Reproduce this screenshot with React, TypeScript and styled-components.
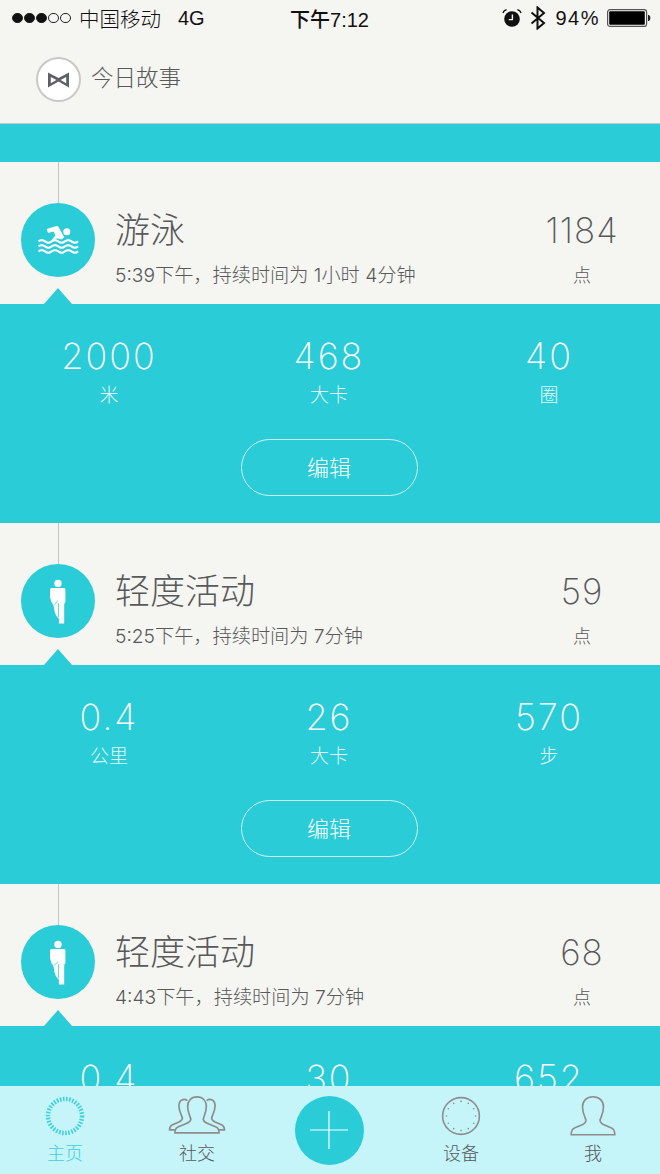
import React from "react";
import styled, { createGlobalStyle } from "styled-components";

const TEAL = "#29ccd7";
const PAPER = "#f5f5f1";
const INK = "#58595b";
const CJK = `"Noto Sans CJK SC", sans-serif`;

const GlobalStyle = createGlobalStyle`
  html, body {
    margin: 0;
    padding: 0;
    background: ${PAPER};
  }
  * {
    box-sizing: border-box;
  }
`;

const Page = styled.div`
  width: 660px;
  height: 1174px;
  display: flex;
  flex-direction: column;
  overflow: hidden;
  background: ${PAPER};
  font-family: "Inter", ${CJK};
`;

const StatusBar = styled.div`
  height: 36px;
  flex: none;
  padding: 0 9px 0 12px;
  display: grid;
  grid-template-columns: 1fr auto 1fr;
  align-items: center;
  color: #111;
  font-family: "Liberation Sans", ${CJK};
  font-size: 20px;
`;

const StatusLeft = styled.div`
  display: flex;
  align-items: center;
`;

const StatusRight = styled.div`
  display: flex;
  align-items: center;
  justify-content: flex-end;
`;

const Dot = styled.span<{ $on: boolean }>`
  width: 10.5px;
  height: 10.5px;
  border-radius: 50%;
  margin-right: 1.5px;
  border: 1px solid #222;
  background: ${(p) => (p.$on ? "#111" : "transparent")};
`;

const Carrier = styled.span`
  margin-left: 7px;
  font-size: 20.5px;
  font-weight: 300;
`;

const Network = styled.span`
  margin-left: 17px;
`;

const Clock = styled.span`
  margin-right: 4px;
  font-weight: 500;
  font-size: 20px;
`;

const AlarmSlot = styled.span`
  display: flex;
  margin-right: 8px;
`;

const Percent = styled.span`
  margin: 0 7px 0 9px;
  letter-spacing: 1.5px;
`;

const StoryBar = styled.div`
  height: 88px;
  flex: none;
  padding-left: 36px;
  display: flex;
  align-items: center;
  gap: 10px;
  border-bottom: 1px solid #c4c6c6;
`;

const StoryBadge = styled.div`
  width: 45px;
  height: 45px;
  border-radius: 50%;
  border: 2px solid #c9c9c9;
  background: #fff;
  display: flex;
  align-items: center;
  justify-content: center;
`;

const StoryTitle = styled.span`
  padding-bottom: 8px;
  font-family: ${CJK};
  font-weight: 300;
  font-size: 22.5px;
  color: ${INK};
`;

const Feed = styled.div`
  flex: 1;
  min-height: 0;
  overflow: hidden;
`;

const TopBand = styled.div`
  height: 38px;
  background: ${TEAL};
`;

const EntryHead = styled.div`
  height: 142px;
  padding-left: 21px;
  display: flex;
  color: ${INK};
`;

const Rail = styled.div`
  width: 74px;
  flex: none;
  display: flex;
  flex-direction: column;
  align-items: center;
`;

const RailLine = styled.div`
  width: 1px;
  height: 41px;
  background: #c4c6c6;
`;

const IconDisc = styled.div`
  width: 74px;
  height: 74px;
  border-radius: 50%;
  background: ${TEAL};
`;

const EntryText = styled.div`
  width: 417px;
  margin-left: 20px;
  padding-top: 40px;
`;

const EntryTitle = styled.div`
  font-family: ${CJK};
  font-weight: 300;
  font-size: 35px;
  line-height: 52px;
`;

const EntryMeta = styled.div`
  margin-top: 8px;
  font-size: 19.2px;
  line-height: 26px;
  font-weight: 300;
  white-space: nowrap;
`;

const Score = styled.div`
  width: 100px;
  padding-top: 42px;
  text-align: center;
`;

const ScoreValue = styled.div`
  font-size: 35px;
  font-weight: 250;
  line-height: 52px;
  letter-spacing: 1px;
`;

const ScoreUnit = styled.div`
  margin-top: 5px;
  font-family: ${CJK};
  font-weight: 300;
  font-size: 18px;
  line-height: 26px;
`;

const Panel = styled.div`
  position: relative;
  height: 219px;
  padding-top: 30px;
  background: ${TEAL};
  color: #fff;
  display: flex;
  flex-direction: column;
  align-items: center;

  &::before {
    content: "";
    position: absolute;
    left: 44px;
    top: -16px;
    border-left: 14px solid transparent;
    border-right: 14px solid transparent;
    border-bottom: 16px solid ${TEAL};
  }
`;

const StatGrid = styled.div`
  width: 660px;
  margin-left: -2px;
  display: grid;
  grid-template-columns: repeat(3, 220px);
  text-align: center;
`;

const StatValue = styled.div`
  font-size: 36px;
  font-weight: 250;
  line-height: 44px;
  letter-spacing: 2px;
`;

const StatUnit = styled.div`
  margin-top: 2px;
  font-family: ${CJK};
  font-weight: 300;
  font-size: 19px;
  line-height: 28px;
  color: #e4fafc;
`;

const EditButton = styled.button`
  margin: 31px 2px 0 0;
  width: 177px;
  height: 57px;
  border-radius: 29px;
  border: 1.5px solid #cdf3f6;
  background: transparent;
  color: #fff;
  font-family: ${CJK};
  font-weight: 300;
  font-size: 22px;
  padding: 0 0 4px;
`;

const TabBar = styled.div`
  height: 88px;
  flex: none;
  margin-left: -1px;
  background: #c5f4f9;
  display: grid;
  grid-template-columns: repeat(5, 132px);
  width: 661px;
`;

const Tab = styled.div<{ $active?: boolean }>`
  display: flex;
  flex-direction: column;
  align-items: center;
  padding-top: 10px;
  color: ${(p) => (p.$active ? "#3fd0da" : "#58595b")};
  font-family: ${CJK};
  font-weight: 300;
  font-size: 18px;
  line-height: 26px;
`;

const TabGlyph = styled.svg`
  display: block;
  margin-bottom: 3px;
`;

const PlusCell = styled.div`
  display: flex;
  align-items: center;
  justify-content: center;
`;

const PlusButton = styled.div`
  width: 69px;
  height: 69px;
  border-radius: 50%;
  background: ${TEAL};
  display: flex;
  align-items: center;
  justify-content: center;
`;

function SwimIcon() {
  return (
    <svg width="74" height="74" viewBox="0 0 74 74" fill="none">
      <circle cx="45.8" cy="28.8" r="3.5" fill="#fff" />
      <path
        d="M25.7 26 L35.5 23 Q37 22.8 37.8 24.4 L43.4 34.6 L40 36.6 Q36.5 34.4 33 36.4 L30.6 37 L34.4 32.4 L32.6 28.4 L27 30 Z"
        fill="#fff"
      />
      {[38.4, 43.4, 48.4].map((y) => (
        <path
          key={y}
          d={`M17.5 ${y} q3.3 -2.6 6.6 0 t6.6 0 t6.6 0 t6.6 0 t6.6 0 t6.6 0`}
          stroke="#fff"
          strokeWidth="2"
        />
      ))}
    </svg>
  );
}

function WalkIcon() {
  return (
    <svg width="74" height="74" viewBox="0 0 74 74" fill="#fff">
      <circle cx="37" cy="19.4" r="3.7" />
      <path d="M29 25.5 Q29 24 30.5 24 L43 24 Q44.4 24 44.4 25.5 L44.4 38 L43.2 40 L43.2 59.4 L37.9 59.4 L37.9 54.5 L37 54 Q33.5 50 33 44 L32.4 41 L30.4 38 L29 33 Z" />
      <path d="M33.4 40.4 L36.8 37 M37.4 39 L37.4 53.4" stroke={TEAL} strokeWidth="0.8" fill="none" />
    </svg>
  );
}

function BowTie() {
  return (
    <svg width="23" height="16" viewBox="0 0 23 16">
      <path
        d="M1 0.5 L11.5 6 L22 0.5 L22 15.5 L11.5 9.5 L1 15.5 Z M3.8 5 L3.8 11.2 L9.4 8 Z M19.2 5 L13.6 8 L19.2 11.2 Z"
        fill="#5f6062"
        fillRule="evenodd"
      />
    </svg>
  );
}

function AlarmIcon() {
  return (
    <svg width="20" height="20" viewBox="0 0 20 20">
      <circle cx="10" cy="11" r="7.8" fill="#111" />
      <path d="M10.4 6.5 L10.4 11.6 L6.8 11.6" stroke="#f5f5f1" strokeWidth="1.4" fill="none" />
      <path d="M1 5 Q2 2 4.6 1.6 M19 5 Q18 2 15.4 1.6" stroke="#111" strokeWidth="1.2" fill="none" />
    </svg>
  );
}

function BluetoothIcon() {
  return (
    <svg width="16" height="24" viewBox="0 0 16 24" fill="none">
      <path d="M1.5 6.5 L14 17 L7.5 22.5 L7.5 1.5 L14 7 L1.5 17.5" stroke="#111" strokeWidth="2" />
    </svg>
  );
}

function BatteryIcon() {
  return (
    <svg width="44" height="18" viewBox="0 0 44 18">
      <rect x="0.6" y="0.6" width="39" height="16.8" rx="2.5" fill="none" stroke="#555" strokeWidth="1.2" />
      <rect x="2.2" y="2.2" width="35.6" height="13.6" rx="1" fill="#000" />
      <path d="M41 6 L42 6 Q43.4 7 43.4 9 Q43.4 11 42 12 L41 12 Z" fill="#222" />
    </svg>
  );
}

function RingIcon() {
  return (
    <TabGlyph width="40" height="40" viewBox="0 0 40 40" fill="none">
      <circle cx="20" cy="20" r="17" stroke="#3fd0da" strokeWidth="4.4" strokeDasharray="1.6 1.5" />
    </TabGlyph>
  );
}

const SIDE_BUST =
  "M19.5 4.5 C16 1.8 11 3.5 11 10 C11 15 13.5 19 14.5 22 C14.5 24 13 25 11 26 L4 29 C2 30 1.6 31.5 1.6 34 L7 34";

function GroupIcon() {
  return (
    <TabGlyph width="58" height="40" viewBox="0 0 58.4 40" fill="none">
      <g stroke="#8d8d8d" strokeWidth="1.7">
        <path d={SIDE_BUST} />
        <path d={SIDE_BUST} transform="translate(58.4 0) scale(-1 1)" />
        <path d="M29.2 0.8 C23 0.8 19.8 5 19.8 10.5 C19.8 16 22 20 23 23 C23 25 21 26.5 18.5 27.5 L10 31 C7.5 32 7 34 7 37 L51.4 37 C51.4 34 51 32 48.4 31 L40 27.5 C37.5 26.5 35.5 25 35.5 23 C36.5 20 38.6 16 38.6 10.5 C38.6 5 35.4 0.8 29.2 0.8 Z" />
      </g>
    </TabGlyph>
  );
}

function DeviceIcon() {
  const dots = Array.from({ length: 12 }, (_, i) => (i * Math.PI) / 6);
  return (
    <TabGlyph width="40" height="40" viewBox="0 0 40 40" fill="none">
      <circle cx="20" cy="20" r="18.4" stroke="#8d8d8d" strokeWidth="1.6" />
      {dots.map((a) => (
        <circle key={a} cx={20 + 14.6 * Math.sin(a)} cy={20 - 14.6 * Math.cos(a)} r="0.8" fill="#8d8d8d" />
      ))}
    </TabGlyph>
  );
}

function PersonIcon() {
  return (
    <TabGlyph width="46" height="40" viewBox="0 0 46 40" fill="none">
      <path
        d="M23 0.8 C16.5 0.8 12.5 5 12.5 11 C12.5 17 15 21 16 24 C16 26.5 14 28 11.5 29 L4.5 32 C2 33 1.2 35 1.2 38.8 L44.8 38.8 C44.8 35 44 33 41.5 32 L34.5 29 C32 28 30 26.5 30 24 C31 21 33.5 17 33.5 11 C33.5 5 29.5 0.8 23 0.8 Z"
        stroke="#8d8d8d"
        strokeWidth="1.6"
      />
    </TabGlyph>
  );
}

type Entry = {
  title: string;
  meta: string;
  score: string;
  icon: React.ReactNode;
  stats: [string, string][];
};

const entries: Entry[] = [
  {
    title: "游泳",
    meta: "5:39下午，持续时间为 1小时 4分钟",
    score: "1184",
    icon: <SwimIcon />,
    stats: [
      ["2000", "米"],
      ["468", "大卡"],
      ["40", "圈"],
    ],
  },
  {
    title: "轻度活动",
    meta: "5:25下午，持续时间为 7分钟",
    score: "59",
    icon: <WalkIcon />,
    stats: [
      ["0.4", "公里"],
      ["26", "大卡"],
      ["570", "步"],
    ],
  },
  {
    title: "轻度活动",
    meta: "4:43下午，持续时间为 7分钟",
    score: "68",
    icon: <WalkIcon />,
    stats: [
      ["0.4", "公里"],
      ["30", "大卡"],
      ["652", "步"],
    ],
  },
];

export default function App() {
  return (
    <Page>
      <GlobalStyle />
      <StatusBar>
        <StatusLeft>
          {[true, true, true, false, false].map((on, i) => (
            <Dot key={i} $on={on} />
          ))}
          <Carrier>中国移动</Carrier>
          <Network>4G</Network>
        </StatusLeft>
        <Clock>下午7:12</Clock>
        <StatusRight>
          <AlarmSlot>
            <AlarmIcon />
          </AlarmSlot>
          <BluetoothIcon />
          <Percent>94%</Percent>
          <BatteryIcon />
        </StatusRight>
      </StatusBar>
      <StoryBar>
        <StoryBadge>
          <BowTie />
        </StoryBadge>
        <StoryTitle>今日故事</StoryTitle>
      </StoryBar>
      <Feed>
        <TopBand />
        {entries.map((e, i) => (
          <div key={i}>
            <EntryHead>
              <Rail>
                <RailLine />
                <IconDisc>{e.icon}</IconDisc>
              </Rail>
              <EntryText>
                <EntryTitle>{e.title}</EntryTitle>
                <EntryMeta>{e.meta}</EntryMeta>
              </EntryText>
              <Score>
                <ScoreValue>{e.score}</ScoreValue>
                <ScoreUnit>点</ScoreUnit>
              </Score>
            </EntryHead>
            <Panel>
              <StatGrid>
                {e.stats.map(([value, unit]) => (
                  <div key={unit}>
                    <StatValue>{value}</StatValue>
                    <StatUnit>{unit}</StatUnit>
                  </div>
                ))}
              </StatGrid>
              <EditButton type="button">编辑</EditButton>
            </Panel>
          </div>
        ))}
      </Feed>
      <TabBar>
        <Tab $active>
          <RingIcon />
          主页
        </Tab>
        <Tab>
          <GroupIcon />
          社交
        </Tab>
        <PlusCell>
          <PlusButton>
            <svg width="38" height="38" viewBox="0 0 38 38">
              <path d="M19 0 V38 M0 19 H38" stroke="#fff" strokeWidth="1.2" />
            </svg>
          </PlusButton>
        </PlusCell>
        <Tab>
          <DeviceIcon />
          设备
        </Tab>
        <Tab>
          <PersonIcon />
          我
        </Tab>
      </TabBar>
    </Page>
  );
}
